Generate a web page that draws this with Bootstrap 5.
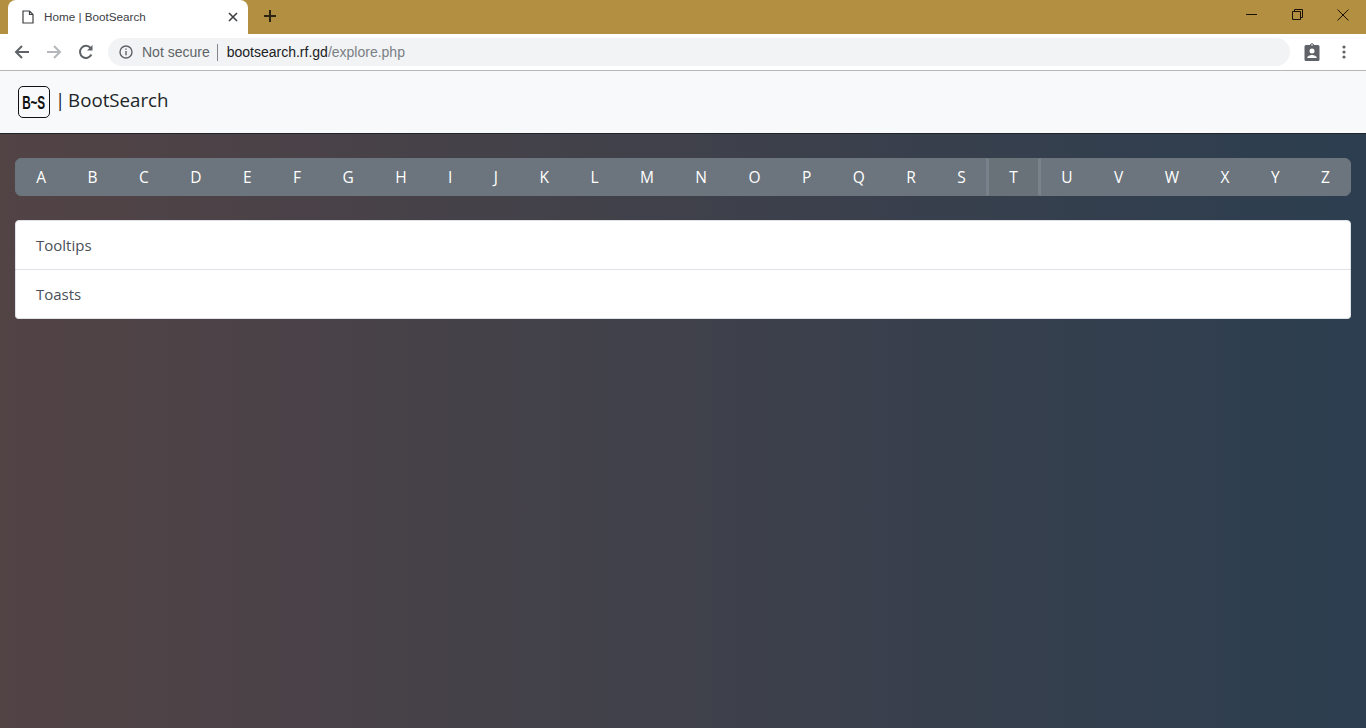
<!DOCTYPE html>
<html>
<head>
    <title>Home | BootSearch</title>
    <link href="https://cdn.jsdelivr.net/npm/bootstrap@5.3.0/dist/css/bootstrap.min.css" rel="stylesheet">
    <script src="https://cdn.jsdelivr.net/npm/bootstrap@5.3.0/dist/js/bootstrap.bundle.min.js"></script>
    <style>
        html, body { height: 100%; }
        body { font-family: "Open Sans", "Noto Sans", sans-serif; display: flex; flex-direction: column; overflow: hidden; background: #2c3e50; }
        .tab-strip { height: 34px; background: #b28f41; padding-left: 8px; }
        .tab-shape { width: 240px; height: 34px; background: #fff; border-radius: 8px 8px 0 0; padding: 0 10px 0 14px; color: #3c4043; font-family: "Liberation Sans", sans-serif; font-size: 11.7px; }
        .tab-title { margin-left: 10px; flex-grow: 1; }
        .new-tab { margin-left: 16px; margin-bottom: 3px; line-height: 0; }
        .win-btn { width: 46px; height: 29px; }
        .tool-strip { height: 37px; background: #fff; border-bottom: 1px solid #b4b6b8; padding: 0 6px; }
        .tool-btn { width: 32px; }
        .tool-clip { margin-bottom: 2px; }
        .addr-bar { height: 28px; background: #f1f3f4; border-radius: 14px; margin: 0 6px 0 6px; padding: 0 11px; font-family: "Liberation Sans", sans-serif; font-size: 14px; color: #202124; }
        .addr-warn { color: #5f6368; margin-left: 9px; }
        .addr-sep { width: 1px; height: 17px; background: #80868b; margin: 0 9px 0 7px; }
        .addr-path { color: #7a7f85; }
        .site-bar { height: 63px; background: #f8f9fa; border-bottom: 1px solid #212529; padding: 0 18px; }
        .logo-box { width: 32px; height: 32px; border: 1.5px solid #111; border-radius: 5px; font-family: "Liberation Sans", sans-serif; font-size: 14px; font-weight: 700; color: #111; }
        .logo-text { display: inline-block; transform: scale(.84, 1.3); letter-spacing: -.2px; margin-top: 3px; }
        .site-name { font-size: 18.7px; color: #212529; margin-left: 5px; line-height: 1; margin-bottom: 4px; word-spacing: -2px; }
        .page-wrap { flex-grow: 1; background: linear-gradient(to right, #524345, #2c3e50); padding: 24px 15px; }
        .alpha-group { height: 38px; --bs-border-radius: 4px; }
        .alpha-btn { padding: 0; font-size: 15.5px; line-height: 36px; background: #6c757d; border-color: #6c757d; }
        .alpha-btn.active { background: #6a7279; border-color: #6a7279; border-left: 3px solid #79828a; border-right: 3px solid #79828a; }
        .topic-list { margin-top: 24px; font-size: 15px; line-height: 24px; --bs-list-group-border-radius: 4px; }
        .topic-list .list-group-item { padding: 12px 20px; color: #495057; }
    </style>
</head>
<body>
    <div class="tab-strip d-flex align-items-start flex-shrink-0">
        <div class="tab-shape d-flex align-items-center">
            <svg width="12" height="14" viewBox="0 0 12 14" fill="none" stroke="#3c4043" stroke-width="1.2"><path d="M1 1h6.500L11 4.500V13H1zM7.500 1v3.500H11"/></svg>
            <span class="tab-title">Home | BootSearch</span>
            <svg width="10" height="10" viewBox="0 0 10 10" stroke="#3c4043" stroke-width="1.600"><path d="M1 1l8 8M9 1l-8 8"/></svg>
        </div>
        <div class="new-tab align-self-center">
            <svg width="12" height="12" viewBox="0 0 12 12" stroke="#2b2413" stroke-width="2"><path d="M6 0v12M0 6h12"/></svg>
        </div>
        <div class="d-flex ms-auto">
            <div class="win-btn d-flex align-items-center justify-content-center"><svg width="11" height="11" viewBox="0 0 11 11" stroke="#1a1304" stroke-width="1"><path d="M0 5.500h11"/></svg></div>
            <div class="win-btn d-flex align-items-center justify-content-center"><svg width="11" height="11" viewBox="0 0 11 11" fill="none" stroke="#1a1304" stroke-width="1"><path d="M.5 2.500h8v8h-8zM2.500 2.500v-2h8v8h-2"/></svg></div>
            <div class="win-btn d-flex align-items-center justify-content-center"><svg width="12" height="12" viewBox="0 0 12 12" stroke="#1a1304" stroke-width="1"><path d="M.5.5l11 11M11.500.5l-11 11"/></svg></div>
        </div>
    </div>
    <div class="tool-strip d-flex align-items-center flex-shrink-0">
        <div class="tool-btn d-flex justify-content-center"><svg width="16" height="16" viewBox="0 0 16 16" fill="none" stroke="#5f6368" stroke-width="2"><path d="M15 8H2M8 2L2 8l6 6"/></svg></div>
        <div class="tool-btn d-flex justify-content-center"><svg width="16" height="16" viewBox="0 0 16 16" fill="none" stroke="#b5b7ba" stroke-width="2"><path d="M1 8h13M8 2l6 6-6 6"/></svg></div>
        <div class="tool-btn d-flex justify-content-center"><svg width="16" height="16" viewBox="0 0 16 16" fill="none" stroke="#5f6368" stroke-width="2"><path d="M13.400 10.500A6 6 0 1 1 12.600 4"/><path d="M14.500 1v5.500H9" fill="#5f6368" stroke="none"/></svg></div>
        <div class="addr-bar d-flex align-items-center flex-grow-1">
            <svg width="14" height="14" viewBox="0 0 14 14" fill="none" stroke="#5f6368" stroke-width="1.400"><circle cx="7" cy="7" r="6"/><path d="M7 6v4.200M7 3.400v1.400"/></svg>
            <span class="addr-warn">Not secure</span>
            <span class="addr-sep"></span>
            <span>bootsearch.rf.gd<span class="addr-path">/explore.php</span></span>
        </div>
        <div class="tool-btn tool-clip d-flex justify-content-center"><svg width="16" height="19" viewBox="0 0 16 19" fill="#5f6368"><path d="M2 3h3.800a2.300 2.300 0 0 1 4.400 0H14a1.500 1.500 0 0 1 1.500 1.500v13A1.500 1.500 0 0 1 14 19H2a1.500 1.500 0 0 1-1.500-1.500v-13A1.500 1.500 0 0 1 2 3z"/><circle cx="8" cy="9" r="2.500" fill="#fff"/><path d="M3.200 16c0-2 3-3 4.800-3s4.800 1 4.800 3z" fill="#fff"/><circle cx="8" cy="3" r=".8" fill="#fff"/></svg></div>
        <div class="tool-btn d-flex justify-content-center"><svg width="4" height="14" viewBox="0 0 4 14" fill="#5f6368"><circle cx="2" cy="2" r="1.600"/><circle cx="2" cy="7" r="1.600"/><circle cx="2" cy="12" r="1.600"/></svg></div>
    </div>
    <nav class="site-bar navbar d-flex justify-content-start align-items-center flex-shrink-0">
        <div class="logo-box d-flex align-items-center justify-content-center"><span class="logo-text">B~S</span></div>
        <span class="site-name">| BootSearch</span>
    </nav>
    <main class="page-wrap">
        <div class="btn-group alpha-group w-100 d-flex" role="group" id="alphabet"></div>
        <ul class="list-group topic-list">
            <li class="list-group-item">Tooltips</li>
            <li class="list-group-item">Toasts</li>
        </ul>
    </main>
    <script>
        // Build the A-Z button row
        const alphabet = document.getElementById("alphabet");
        "ABCDEFGHIJKLMNOPQRSTUVWXYZ".split("").forEach((letter) => {
            const button = document.createElement("button");
            button.type = "button";
            button.className = "btn btn-secondary alpha-btn" + (letter === "T" ? " active" : "");
            button.textContent = letter;
            alphabet.appendChild(button);
        });
    </script>
</body>
</html>
